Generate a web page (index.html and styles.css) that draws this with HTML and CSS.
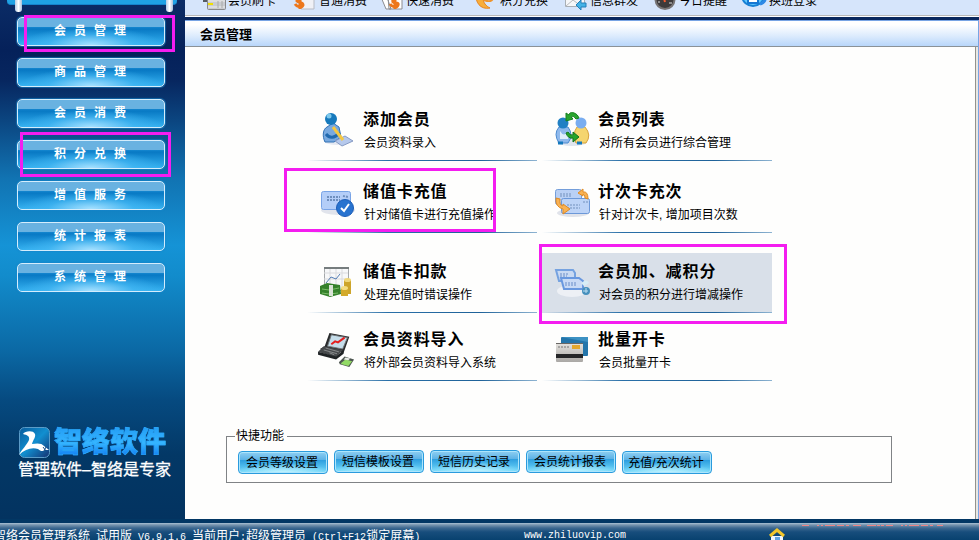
FILE: index.html
```html
<!DOCTYPE html>
<html lang="zh-CN">

<head>
    <meta charset="utf-8">
    <title>智络会员管理系统</title>
    <link rel="stylesheet" href="styles.css">
</head>

<body>
    <div class="workspace">
        <aside class="sidebar">
            <div class="sign"><i></i><i></i></div>
            <nav class="menu">
                <a>会员管理</a>
                <a>商品管理</a>
                <a>会员消费</a>
                <a>积分兑换</a>
                <a>增值服务</a>
                <a>统计报表</a>
                <a>系统管理</a>
            </nav>
            <div class="brand">
                <div class="brand-name">
                    <svg width="32" height="32" viewBox="0 0 32 32">
                        <defs>
                            <linearGradient id="logo" x1="0" y1="0" x2="1" y2="1">
                                <stop offset="0" stop-color="#0a5c9c" />
                                <stop offset=".5" stop-color="#118fd0" />
                                <stop offset="1" stop-color="#153070" />
                            </linearGradient>
                        </defs>
                        <rect x="1.500" y=".5" width="30" height="30" rx="5" fill="url(#logo)" stroke="#5b9cc8" />
                        <path d="M5 7C7 4 15 3 17 7C18 10 15 13 14 17C19 16 24 16 26 19L31 23L27 23C25 25 22 24 20 22C14 20 7 22 1 28C4 22 9 18 11 13C12 9 9 8 5 7Z" fill="#fff" />
                        <path d="M25 20l3 4M28 20l-2 4" stroke="#174f88" stroke-width="1" />
                    </svg>
                    <b>智络软件</b>
                </div>
                <p>管理软件–智络是专家</p>
            </div>
        </aside>

        <main class="main">
            <nav class="toolbar">
                <a>
                    <svg width="24" height="24" viewBox="0 0 24 24">
                        <path d="M0 11h22v6H4v-2H0z" fill="#555b60" />
                        <rect x="4.500" y="9.500" width="18" height="13" rx="1" fill="#c9cbd0" stroke="#88898c" />
                        <path d="M5 14h17M5 20h17" stroke="#eee" />
                        <path d="M5 16h5v2H5z" fill="#f0df00" />
                        <path d="M15 14v7M19 14v7" stroke="#a9aaa8" />
                    </svg>会员刷卡</a>
                <a>
                    <svg width="24" height="24" viewBox="0 0 24 24">
                        <path d="M6 3h14v19H7z" fill="#f0f1f6" stroke="#b8bbc4" />
                        <path d="M9 12C7 10 3 11 3 14C5 16 9 15 9 18C8 21 3 20 1 17M6 9v13" fill="none" stroke="#ed771b" stroke-width="3" />
                    </svg>普通消费</a>
                <a>
                    <svg width="24" height="24" viewBox="0 0 24 24">
                        <path d="M0 10h6l4 12H5zM7 10h14v12H8z" fill="#fff" stroke="#8b8c91" />
                        <path d="M18 12C15 10 11 12 12 15C14 17 18 15 17 18C16 21 11 20 9 17M14 9v13" fill="none" stroke="#ed771b" stroke-width="3" />
                    </svg>快速消费</a>
                <a>
                    <svg width="24" height="24" viewBox="0 0 24 24">
                        <path d="M1 6C0 15 5 23 15 21C11 19 8 16 8 10" fill="#f8ad3a" stroke="#e78422" />
                        <path d="M9 13q8 3 9-2" fill="none" stroke="#ee942d" stroke-width="2" />
                    </svg>积分兑换</a>
                <a>
                    <svg width="24" height="24" viewBox="0 0 24 24">
                        <path d="M.5 5.500h19v14H.5z" fill="#f6f7f9" stroke="#a9afb5" />
                        <path d="M1 19l7-6 8 6" fill="none" stroke="#b8babd" />
                        <path d="M11 18l5-5v3h5v4h-5v3z" fill="#43b2e6" stroke="#247eb8" />
                    </svg>信息群发</a>
                <a>
                    <svg width="24" height="24" viewBox="0 0 24 24">
                        <circle cx="11" cy="12.500" r="9.500" fill="#3d3a3b" stroke="#777475" stroke-width="2" />
                        <path d="M11 15l-2-8" stroke="#f65b2c" stroke-width="2" />
                        <path d="M4 15h2M15 16h3" stroke="#ddd" />
                    </svg>今日提醒</a>
                <a>
                    <svg width="26" height="24" viewBox="0 0 26 24">
                        <ellipse cx="11" cy="10" rx="10.500" ry="9" fill="#60caff" stroke="#1680d5" stroke-width="2" />
                        <path d="M6 8h10v8H6z" fill="#fff" stroke="#1577d3" stroke-width="2" />
                        <path d="M18 17q6-2 5-7" fill="none" stroke="#2e89e6" stroke-width="3" />
                    </svg>换班登录</a>
            </nav>

            <section class="panel">
                <h1>会员管理</h1>
                <div class="content">
                    <div class="cards">
                        <a class="card">
                            <svg width="36" height="36" viewBox="0 0 36 36">
                                <ellipse cx="18" cy="30" rx="13" ry="4" fill="#e5e9f2" />
                                <path d="M6 31C3 25 4 18 8 16L14 12L20 16L22 26L15 31z" fill="#78a9df" stroke="#3372b5" />
                                <path d="M7 23C11 28 15 27 21 22" fill="none" stroke="#216aaf" stroke-width="3" />
                                <circle cx="12" cy="8" r="6" fill="#1679bc" />
                                <circle cx="10" cy="5" r="2.500" fill="#7dc8ec" />
                                <path d="M16 30l10-5 8 5-11 5z" fill="#b6c9ec" stroke="#879bc4" />
                                <path d="M14 16l10 13" stroke="#f5c842" stroke-width="3" />
                            </svg>
                            <div><h2>添加会员</h2><p>会员资料录入</p></div>
                        </a>
                        <a class="card">
                            <svg width="36" height="36" viewBox="0 0 36 36">
                                <ellipse cx="18" cy="31" rx="15" ry="4" fill="#dfe5ef" />
                                <path d="M5 32Q-1 23 5 16h9Q20 24 14 32z" fill="#8fb9ec" stroke="#4c8bd0" />
                                <path d="M22 32Q18 23 23 16h8Q38 24 32 32z" fill="#f5d56f" stroke="#d8a33d" />
                                <path d="M6 20q4 7 8 0v8H6z" fill="#e0eefb" />
                                <circle cx="9" cy="12" r="5.500" fill="#2180c4" />
                                <circle cx="27" cy="12" r="5.500" fill="#79adf0" />
                                <path d="M4 32h5M23 32h5" stroke="#1479bd" stroke-width="3" />
                                <path d="M25 7C23 1 15 0 15 4L12 2V10L19 8L17 6Q20 4 22 8z" fill="#29a52e" stroke="#178020" />
                                <path d="M12 22Q14 28 19 27V31L25 26L19 21V24Q16 25 14 21z" fill="#25a42a" stroke="#12751b" />
                            </svg>
                            <div><h2>会员列表</h2><p>对所有会员进行综合管理</p></div>
                        </a>
                        <a class="card">
                            <svg width="36" height="36" viewBox="0 0 36 36">
                                <ellipse cx="19" cy="27" rx="17" ry="5" fill="#e1e4ec" />
                                <rect x="2.500" y="8.500" width="29" height="18" rx="2" fill="#b4cef8" stroke="#79a4e6" />
                                <path d="M8 14h13M8 17h13M24 13l5 1" stroke="#6f8fbe" stroke-width="2" stroke-dasharray="2 1" />
                                <circle cx="26" cy="25" r="8.500" fill="#2873cf" stroke="#1c5db7" />
                                <path d="M22 25l3 3 5-7" fill="none" stroke="#fff" stroke-width="2" />
                            </svg>
                            <div class="clipped"><h2>储值卡充值</h2><p>针对储值卡进行充值操作</p></div>
                        </a>
                        <a class="card">
                            <svg width="36" height="36" viewBox="0 0 36 36">
                                <ellipse cx="19" cy="30" rx="16" ry="4" fill="#e0e3ea" />
                                <rect x="1.500" y="6.500" width="26" height="15" rx="2" fill="#b9d0f5" stroke="#749eda" />
                                <rect x="7.500" y="15.500" width="28" height="15" rx="2" fill="#bcd3f7" stroke="#6c98d8" />
                                <path d="M6 11h11M6 13h11M13 22h13M13 25h13M29 19h5" stroke="#7391bd" stroke-dasharray="2 1" />
                                <path d="M2 15Q1 24 9 26V31L16 26L9 21V23Q5 22 6 16zM34 16Q34 8 29 9V6L24 10L29 13V11Q31 11 31 15z" fill="#f9b253" stroke="#e08b25" />
                            </svg>
                            <div><h2>计次卡充次</h2><p>针对计次卡, 增加项目次数</p></div>
                        </a>
                        <a class="card">
                            <svg width="36" height="36" viewBox="0 0 36 36">
                                <path d="M5.500 4.500h24v23h-24z" fill="#f7f8f9" stroke="#a5a8aa" />
                                <path d="M5 10h24M5 16h24M11 5v21M17 5v21M23 5v21" stroke="#d9dadd" />
                                <path d="M5 5h25" stroke="#767d7e" stroke-width="2" />
                                <path d="M7 20l5-6 5 2 4-5" fill="none" stroke="#557eb5" />
                                <path d="M1 23l7-3 13 2 1 9-11 3-10-3z" fill="#35812b" />
                                <path d="M3 26l7 1 10-2M3 30l7 1 9-1" stroke="#79bc67" fill="none" />
                                <path d="M10 22h4v11h-4z" fill="#d9e2d5" />
                                <path d="M25 17h7v14h-7z" fill="#cda52b" />
                                <ellipse cx="28.500" cy="17" rx="3.500" ry="2" fill="#f0d779" />
                                <path d="M22 25h7v8h-7z" fill="#d3aa2b" />
                                <ellipse cx="25.500" cy="25" rx="3.500" ry="2" fill="#f4dd82" />
                            </svg>
                            <div><h2>储值卡扣款</h2><p>处理充值时错误操作</p></div>
                        </a>
                        <a class="card active">
                            <svg width="36" height="36" viewBox="0 0 36 36">
                                <ellipse cx="18" cy="28" rx="15" ry="6" fill="#edf0f5" />
                                <path d="M2 7h17l2 3v8H5z" fill="#c9daf3" stroke="#75a2e0" stroke-width="2" />
                                <path d="M7 15h18l4 3v8H10z" fill="#c9daf5" stroke="#6998df" stroke-width="2" />
                                <path d="M6 11h9M6 13h7M11 20h12M11 22h12" stroke="#688cc8" stroke-dasharray="2 1" />
                                <path d="M27 20q6-5 8 0l-5 3z" fill="#d7edf6" />
                                <circle cx="32" cy="28" r="4" fill="#4690bd" />
                                <path d="M32 25v5M29 28h5" stroke="#bedff2" />
                            </svg>
                            <div><h2>会员加、减积分</h2><p>对会员的积分进行增减操作</p></div>
                        </a>
                        <a class="card">
                            <svg width="38" height="38" viewBox="0 0 38 38">
                                <path d="M11 2l21 4-6 17L1 19l5-3z" fill="#292b2d" />
                                <path d="M13 4l17 3-5 12-16-3z" fill="#c5ddea" stroke="#707578" />
                                <path d="M13 14l4-3 3 1 7-5" fill="none" stroke="#e51e1e" stroke-width="2" />
                                <path d="M5 16l20 4-7 8L-1 22z" fill="#46494b" />
                                <path d="M-1 22l19 5 8-7v4l-8 6L-1 25z" fill="#1f2325" />
                                <path d="M7 18l14 4M5 20l14 4M11 23l5 2" stroke="#8a8d8e" />
                                <path d="M21 33l6-6 10 3-5 8-10-3z" fill="#4d5650" />
                                <path d="M23 34l5-4 7 2-4 5-7-2z" fill="#92da65" />
                                <path d="M28 28l5 1-2 2-5-1z" fill="#e8ece6" />
                            </svg>
                            <div><h2>会员资料导入</h2><p>将外部会员资料导入系统</p></div>
                        </a>
                        <a class="card">
                            <svg width="36" height="36" viewBox="0 0 36 36">
                                <defs>
                                    <linearGradient id="silver" x1="0" y1="0" x2="0" y2="1">
                                        <stop offset="0" stop-color="#e5e3df" />
                                        <stop offset="1" stop-color="#aaa8a5" />
                                    </linearGradient>
                                </defs>
                                <rect x="7" y="6" width="27" height="19" rx="1" fill="#2475aa" />
                                <path d="M7 6h27v5z" fill="#3c91c3" />
                                <rect x="2" y="12" width="27" height="19" rx="1" fill="url(#silver)" />
                                <path d="M2 12.500h27" stroke="#6a6866" />
                                <path d="M2 23h27v4H2z" fill="#252628" />
                                <path d="M18 14h8v4h-8z" fill="#e4a72d" />
                                <path d="M4 16h12" stroke="#777" stroke-dasharray="2 1" />
                            </svg>
                            <div><h2>批量开卡</h2><p>会员批量开卡</p></div>
                        </a>
                    </div>

                    <fieldset class="shortcuts">
                        <legend>快捷功能</legend>
                        <button class="low">会员等级设置</button>
                        <button>短信模板设置</button>
                        <button>短信历史记录</button>
                        <button>会员统计报表</button>
                        <button class="low">充值/充次统计</button>
                    </fieldset>
                </div>
            </section>
        </main>
    </div>

    <footer class="statusbar">
        <span class="info">智络会员管理系统<code> </code>试用版<code> V6.9.1.6 </code>当前用户<code>:</code>超级管理员<code> (Ctrl+F12</code>锁定屏幕<code>)</code></span>
        <code class="site">www.zhiluovip.com</code>
        <svg class="home" width="16" height="16" viewBox="0 0 16 16">
            <path d="M2 8h12v8H2z" fill="#f2f6fc" />
            <path d="M6 9h5v7H6z" fill="#63a5e3" />
            <path d="M1 8l7-6 7 6" fill="none" stroke="#f4c72c" stroke-width="3" />
        </svg>
        <svg class="notice" width="141" height="1" viewBox="0 0 141 1">
            <path d="M0 .5h141" stroke="#ef8585" stroke-dasharray="7 8 2 2 2 2 10 2 7 2 3 4 8 6 9 1 3 1 3 2" />
        </svg>
    </footer>

    <!-- highlighted entries -->
    <div class="mark mark-member"></div>
    <div class="mark mark-points"></div>
    <div class="mark mark-recharge"></div>
    <div class="mark mark-adjust"></div>
</body>

</html>
```
FILE: styles.css
```css
* {
    margin: 0;
    padding: 0;
    box-sizing: border-box;
}

body {
    width: 979px;
    height: 540px;
    overflow: hidden;
    background-color: #033461;
    font: 12px/16px "Liberation Sans", "Noto Sans CJK SC", sans-serif;
    color: black;
}

svg {
    display: block;
    flex: none;
    overflow: visible;
}

.workspace {
    display: flex;
    height: 519px;
}

/* sidebar */

.sidebar {
    display: flex;
    flex-direction: column;
    width: 185px;
    background-image: linear-gradient(#0b2c66 0, #05215a 50px, #07265f 80px, #0b4580 120px, #1173b2 178px, #1593d6 245px, #128ccc 275px, #0b69a5 350px, #064a80 400px, #033866 455px, #033360 519px);
}

.sign {
    display: flex;
    justify-content: space-between;
    width: 170px;
    height: 5px;
    margin: 0 0 12px 7px;
    padding: 0 4px 0 8px;
    background-color: #1fa2e4;
    border-bottom: 1px solid #1584cc;
    border-radius: 0 0 4px 4px;
}

.sign i {
    width: 7px;
    height: 12px;
    background-image: linear-gradient(to right, #b4cbe3, #fff, #a9bfd8);
    border-radius: 0 0 3px 3px;
}

.menu {
    display: grid;
    gap: 12px;
    padding-left: 17px;
}

.menu a {
    width: 148px;
    height: 29px;
    padding-left: 36px;
    border: 1px solid #d4edfc;
    border-radius: 5px;
    box-shadow: 0 0 1px 1px rgba(22, 134, 204, 0.6);
    background-image: linear-gradient(rgba(255, 255, 255, 0.36) 9px, transparent 9px), radial-gradient(ellipse 72px 18px at 50% 100%, #a5e0ff, rgba(70, 185, 245, 0.6) 60%, transparent), linear-gradient(#1587d0 9px, #0879c4 11px, #38b5f3 28px);
    color: white;
    font-weight: bold;
    line-height: 27px;
    letter-spacing: 8px;
}

.brand {
    margin-top: 135px;
    padding-left: 18px;
    color: white;
    white-space: nowrap;
}

.brand-name {
    display: flex;
    gap: 4px;
    height: 32px;
}

.brand-name b {
    font-size: 28px;
    font-weight: 900;
    line-height: 32px;
    background-image: linear-gradient(#239df5, #35b5ff 50%, #0870f0);
    -webkit-background-clip: text;
    background-clip: text;
    color: transparent;
    -webkit-text-stroke: 0.6px #2ba8fa;
}

.brand p {
    font-size: 16px;
    line-height: 21px;
    -webkit-text-stroke: 0.3px white;
}

/* top icons */

.main {
    flex: 1;
    display: flex;
    flex-direction: column;
    background-color: #0a285f;
}

.toolbar {
    display: grid;
    grid-template-columns: 91px 87px 94px 90px 89px 88px 1fr;
    grid-template-rows: 11px;
    align-items: end;
    height: 17px;
    padding: 0 0 5px 18px;
    border-bottom: 1px solid #fff;
    background-image: linear-gradient(#d6e5fb 15px, #b9b9b9 15px);
    white-space: nowrap;
}

.toolbar a {
    display: flex;
    gap: 1px;
    height: 24px;
    line-height: 28px;
}

/* content panel */

.panel {
    flex: 1;
    display: flex;
    flex-direction: column;
    margin-top: 3px;
    border-top: 1px solid #78a4e4;
    border-right: 1px solid #78a4e4;
    background-color: #e9e8e2;
}

.panel h1 {
    height: 26px;
    padding-left: 15px;
    border-bottom: 1px solid #8b9297;
    background-image: linear-gradient(#fff 15%, #dcebfd 60%, #b8d6fa);
    font-size: 13px;
    line-height: 28px;
}

.content {
    flex: 1;
    margin-right: 2px;
    border-right: 1px solid #92928e;
    background-color: #fefefd;
}

.cards {
    display: grid;
    grid-template-columns: 230px 230px;
    grid-template-rows: 72px 80px 68px 60px;
    column-gap: 5px;
    padding: 54px 0 0 122px;
}

.card {
    display: flex;
    height: 60px;
    padding: 10px 0 0 12px;
    background: linear-gradient(to right, transparent, #2a70a8 35%, #1f6299 75%, #8eb4d2) 0 100% / 100% 1px no-repeat;
    white-space: nowrap;
}

.card svg {
    width: 36px;
    height: 36px;
    margin-right: 8px;
}

.card h2 {
    font-size: 16px;
    line-height: 18px;
    letter-spacing: 0.9px;
}

.card p {
    padding: 6px 0 0 1px;
    line-height: 16px;
}

.active {
    background-color: #d9e0e9;
}

.clipped {
    width: 132px;
    overflow: hidden;
}

.shortcuts {
    display: flex;
    gap: 6px;
    width: 666px;
    height: 55px;
    margin: 47px 0 0 41px;
    padding: 6px 11px;
    border: 1px solid #808386;
}

.shortcuts legend {
    margin-left: -3px;
    padding: 0 3px 0 1px;
}

.shortcuts button {
    width: 90px;
    height: 23px;
    padding-right: 2px;
    border: 1px solid #2a9bdd;
    border-radius: 4px;
    box-shadow: inset 0 0 0 1px #ade5fc;
    background-image: radial-gradient(ellipse 50px 10px at 50% 100%, #c6f5ff, transparent), linear-gradient(#8fcff2, #5cb2e6 38%, #2e9fdf 40%, #74dcfc);
    font: inherit;
    line-height: 20px;
    white-space: nowrap;
}

.shortcuts .low {
    margin-top: 1px;
}

/* status bar */

.statusbar {
    display: flex;
    align-items: flex-start;
    height: 21px;
    padding-top: 9px;
    background-image: linear-gradient(#023764 4px, #a9c0d3 4px, #7593ae 6px, #3c6890 9px, #174d7c 13px, #08416f 21px);
    color: white;
    white-space: nowrap;
}

.statusbar code {
    font: 10px/16px "Liberation Mono", monospace;
    white-space: pre;
}

.info {
    width: 530px;
    margin-left: -6px;
}

.site {
    width: 245px;
}

.home {
    margin-right: 17px;
}

.notice {
    margin-top: -3px;
}

/* magenta frames over the window */

.mark {
    position: absolute;
    border: 3px solid #f41df0;
}

.mark-member {
    left: 24px;
    top: 15px;
    width: 151px;
    height: 37px;
}

.mark-points {
    left: 20px;
    top: 132px;
    width: 151px;
    height: 45px;
}

.mark-recharge {
    left: 284px;
    top: 168px;
    width: 212px;
    height: 64px;
}

.mark-adjust {
    left: 539px;
    top: 244px;
    width: 248px;
    height: 80px;
}
```
